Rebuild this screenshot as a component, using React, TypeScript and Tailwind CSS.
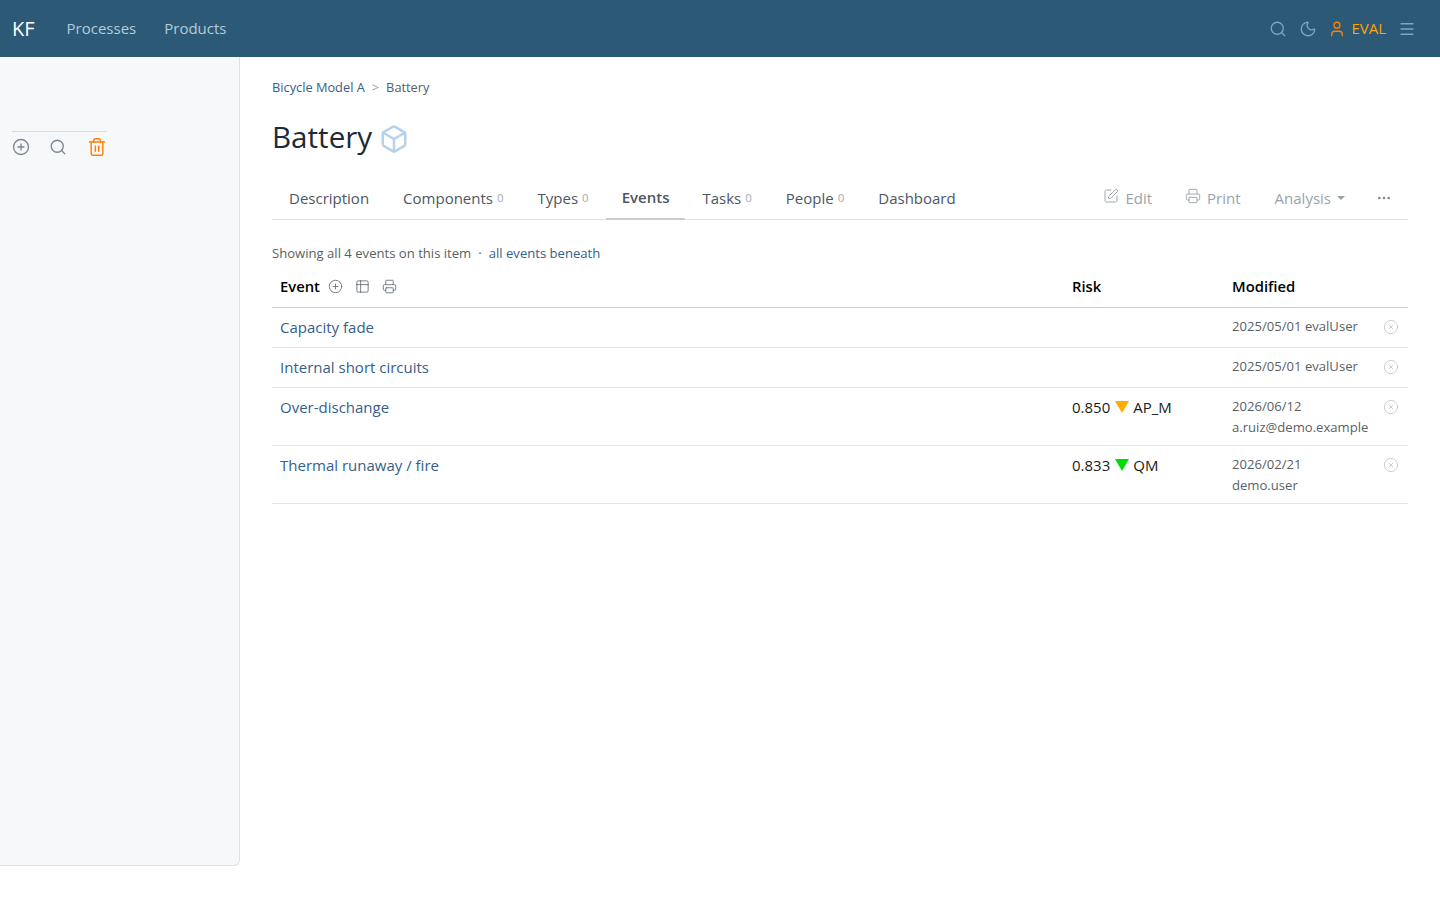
import { CirclePlus, Search, Trash2, Moon, User, Menu, Box, SquarePen, Printer, Table2, CircleX, Ellipsis } from 'lucide-react';

const rows = [
  { name: 'Capacity fade', date: '2025/05/01 evalUser' },
  { name: 'Internal short circuits', date: '2025/05/01 evalUser' },
  { name: 'Over-dischange', score: '0.850', mark: 'border-t-[#ffab00]', role: 'AP_M', date: '2026/06/12', user: 'a.ruiz@demo.example' },
  { name: 'Thermal runaway / fire', score: '0.833', mark: 'border-t-[#00dd00]', role: 'QM', date: '2026/02/21', user: 'demo.user' },
];

const tabs = [
  { label: 'Description' },
  { label: 'Components', count: 0 },
  { label: 'Types', count: 0 },
  { label: 'Events', active: true },
  { label: 'Tasks', count: 0 },
  { label: 'People', count: 0 },
  { label: 'Dashboard' },
];

export default function App() {
  return (
    <div className="min-h-[900px] bg-white font-['Open_Sans',sans-serif] text-[15px] text-[#212529]">
      <header className="flex h-[57px] items-center bg-[#2c5975] pl-3 pr-[24px]">
        <span className="text-[20px] text-white">KF</span>
        <nav className="ml-[32px] flex gap-[28px] text-[15px] text-[#b4cbdc]">
          <span>Processes</span>
          <span>Products</span>
        </nav>
        <div className="ml-auto flex items-center text-[#7ba5c9]">
          <Search size={18} strokeWidth={1.75} />
          <Moon size={18} strokeWidth={1.75} className="ml-[12px]" />
          <User size={18} strokeWidth={1.75} className="ml-[11px] text-[#ff8000]" />
          <span className="ml-[5px] text-[15px] text-[#ffa500]">EVAL</span>
          <Menu size={18} strokeWidth={1.75} className="ml-[12px]" />
        </div>
      </header>

      <div className="flex">
        <aside className="h-[809px] w-[240px] shrink-0 rounded-br-md border-r border-b border-[#dee2e6] bg-[#f7f8fa] pt-[74px] pl-3">
          <div className="flex w-[95px] items-center border-t border-[#d9dbde] pt-[5px]">
            <CirclePlus size={18} strokeWidth={1.75} className="text-[#7a8793]" />
            <Search size={18} strokeWidth={1.75} className="ml-[19px] text-[#7a8793]" />
            <Trash2 size={20} strokeWidth={1.75} className="ml-[20px] text-[#ff8000]" />
          </div>
        </aside>

        <main className="min-w-0 flex-1 px-8">
          <div className="flex items-center pt-[20px] text-[12.8px] leading-[20px]">
            <span className="text-[#35608a]">Bicycle Model A</span>
            <span className="mx-[7px] text-[#9aa1a8]">&gt;</span>
            <span className="text-[#53606c]">Battery</span>
          </div>

          <div className="mt-[19px] flex items-center">
            <h1 className="text-[29.6px] font-medium leading-[42px] text-[#1f2a37]">Battery</h1>
            <Box size={30} strokeWidth={2} className="ml-[7px] mt-[3px] text-[#b8d1ea]" />
          </div>

          <div className="mt-[16px] flex h-[46px] items-stretch border-b border-[#dee2e6] text-[15px] text-[#4b5763]">
            {tabs.map((t) => (
              <div key={t.label} className={t.active ? 'flex items-center -mb-px border-b-2 border-[#c9ccd0] px-4 pt-[2px] font-semibold' : 'flex items-center px-[17px] pt-[3px]'}>
                {t.label}
                {t.count !== undefined && <span className="ml-1 text-[11.5px] text-[#a3abb3]">{t.count}</span>}
              </div>
            ))}
            <div className="ml-auto flex items-center pr-4 pt-[3px] text-[#9aa3ac]">
              <SquarePen size={16} strokeWidth={1.4} className="mb-[5px]" />
              <span className="ml-[6px]">Edit</span>
              <Printer size={16} strokeWidth={1.4} className="mb-[5px] ml-[33px]" />
              <span className="ml-[6px]">Print</span>
              <span className="ml-[34px]">Analysis</span>
              <span className="ml-[6px] h-0 w-0 border-x-[4px] border-t-[4px] border-x-transparent border-t-[#9aa3ac]" />
              <Ellipsis size={16} className="ml-[31px] text-[#7a8793]" />
            </div>
          </div>

          <p className="mt-[23px] text-[13.1px] leading-[20px] text-[#5b5f63]">
            Showing all 4 events on this item
            <span className="mx-[7px]">·</span>
            <span className="text-[#35608a]">all events beneath</span>
          </p>

          <div className="mt-[4px] grid h-[41px] grid-cols-[792px_160px_1fr] items-center border-b border-[#c8ced6] pb-[2px] text-[14.8px] font-semibold text-black">
            <div className="flex items-center pl-2">
              Event
              <CirclePlus size={15} strokeWidth={1.4} className="ml-[8px] text-[#66707a]" />
              <Table2 size={15} strokeWidth={1.4} className="ml-[12px] text-[#66707a]" />
              <Printer size={15} strokeWidth={1.4} className="ml-[12px] text-[#66707a]" />
            </div>
            <div className="pl-2">Risk</div>
            <div className="pl-2">Modified</div>
          </div>

          {rows.map((r) => (
            <div key={r.name} className="grid min-h-[40px] grid-cols-[792px_160px_1fr] border-b border-[#e2e5e9] pt-[8px] pb-[8px]">
              <div className="pl-2 leading-[22px] text-[#35608a]">{r.name}</div>
              <div className="flex items-center self-start pl-2 leading-[22px] text-[#1c1c1c]">
                {r.score && (
                  <>
                    {r.score}
                    <span className={`ml-[5px] mr-[4px] h-0 w-0 border-x-[7px] border-t-[12px] border-x-transparent ${r.mark}`} />
                    {r.role}
                  </>
                )}
              </div>
              <div className="flex justify-between pl-2 pr-[9px] text-[13.1px] leading-[20.5px] text-[#5b5f63]">
                <div>
                  <div>{r.date}</div>
                  {r.user && <div>{r.user}</div>}
                </div>
                <CircleX size={16} strokeWidth={1.3} className="mt-[3px] text-[#c4c7ca]" />
              </div>
            </div>
          ))}
        </main>
      </div>
    </div>
  );
}
